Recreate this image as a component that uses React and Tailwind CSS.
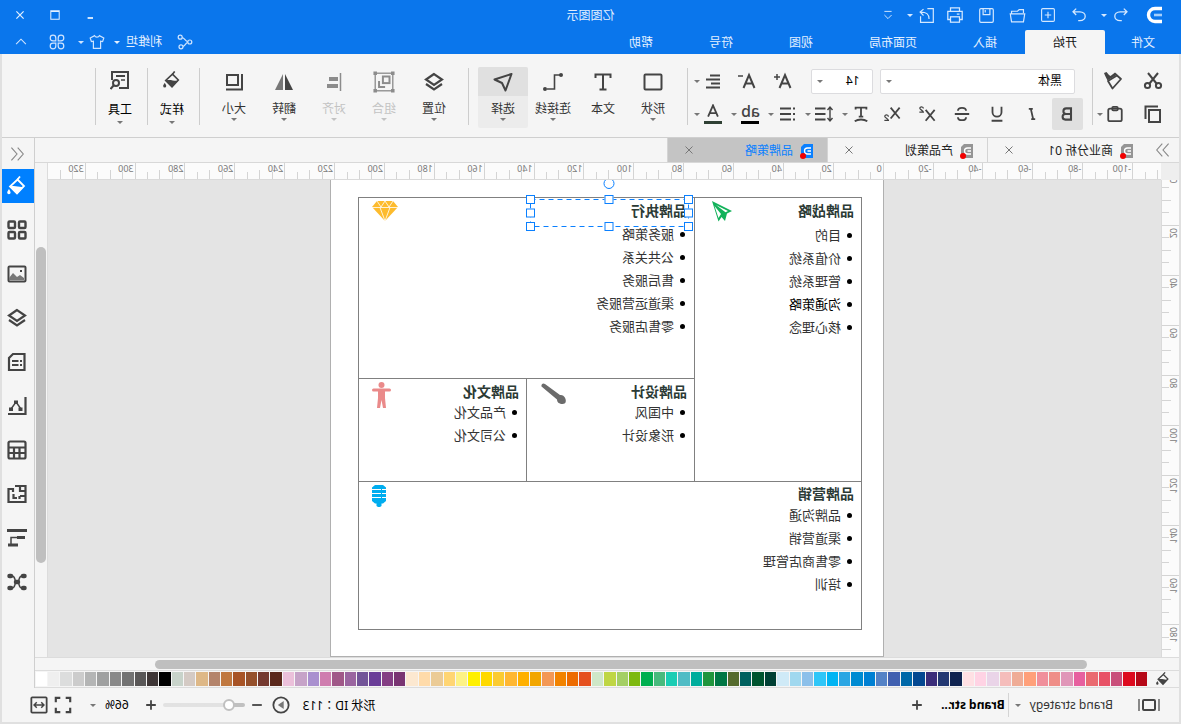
import { useState } from "react";
import clsx from "clsx";

const PALETTE = [
  "#b60817", "#dd0a1e", "#c94f7a", "#e85266", "#ea6a70", "#e7609f", "#e096b8", "#ef8e88", "#f08f9b", "#ffa07a",
  "#efac96", "#f5bdbb", "#ead4e8", "#ffd3e4", "#ffe0e4", "#0f2350", "#233872", "#3b2d7a", "#044891", "#0068a8",
  "#4160b0", "#5482c6", "#0080d3", "#008bd2", "#2ba6e3", "#00b4f3", "#2fc6f8", "#8cc0ea", "#a0d8ef", "#cfeaf7",
  "#004034", "#00542f", "#00615f", "#566b2e", "#007745", "#20953d", "#00ad9c", "#50bcc5", "#1acdb4", "#48ba7d",
  "#00af50", "#7db90f", "#a4cf64", "#bfd644", "#cfe7c8", "#e5501f", "#ed6b00", "#f28300", "#f39855", "#f2a600",
  "#ffb000", "#ffb732", "#fbcb32", "#ffd900", "#fff000", "#fdf286", "#ffd573", "#ebcb96", "#ffdbaa", "#fce8d0",
  "#793472", "#843e84", "#6a3d98", "#725498", "#9a65a0", "#a05888", "#cf7daf", "#a990cf", "#c6a3c8", "#ebc0da",
  "#5a281b", "#753a30", "#95502b", "#a85426", "#c07840", "#b4846b", "#deb887", "#d4cac4", "#c8d3ca", "#000000",
  "#3e3636", "#595757", "#727272", "#898989", "#9fa0a0", "#b4b5b5", "#cccccc", "#dcdddd", "#efefef", "#ffffff",
];

const MENU_TABS = ["文件", "开始", "插入", "页面布局", "视图", "符号", "帮助"];

const DOC_TABS = [
  { id: 1, name: "商业分析 01" },
  { id: 2, name: "产品策划" },
  { id: 3, name: "品牌策略" },
];

const Icon = ({ size = 20, width = 2, className, children }) => (
  <svg
    width={size}
    height={size}
    viewBox="0 0 20 20"
    fill="none"
    stroke="currentColor"
    strokeWidth={width}
    className={clsx("shrink-0", className)}
    aria-hidden="true"
  >
    {children}
  </svg>
);

const Caret = ({ className }) => (
  <svg width="6" height="3" viewBox="0 0 6 3" className={clsx("shrink-0", className)} aria-hidden="true">
    <path d="M0 0h6L3 3z" fill="currentColor" />
  </svg>
);

const IconButton = ({ label, className, children }) => (
  <button type="button" aria-label={label} className={clsx("flex items-center justify-center", className)}>
    {children}
  </button>
);

const BucketIcon = ({ size, className }) => (
  <Icon size={size} className={className} width={1.8}>
    <path d="M7 0.500l2.500 3" />
    <path d="M9.500 3.500L3 10l7 7.500L17 10.500z" />
    <path d="M3 10.500c4 1.500 8-1.500 14 0L10 18z" fill="currentColor" stroke="none" />
    <path d="M18 13c1.300 2 1.800 2.600 1.800 3.600a1.700 1.700 0 0 1-3.400 0c0-1 .5-1.600 1.600-3.600z" fill="currentColor" stroke="none" />
  </Icon>
);

const LayersIcon = ({ size = 20 }) => (
  <Icon size={size} width={2.2}>
    <path d="M10 2l8 5.500-8 5.500-8-5.500z" />
    <path d="M2 12l8 5.500 8-5.500" />
  </Icon>
);

/* ---------- title bar ---------- */

const TitleBar = () => (
  <div className="grid h-[30px] grid-cols-[1fr_auto_1fr] items-center">
    <div className="flex items-center text-[#d4e8ff]">
      <span className="flex w-[47px] pl-[19px]">
        <svg width="16" height="18" viewBox="0 0 16 18" fill="none" aria-hidden="true">
          <path d="M0 2.500h7a6.500 6.500 0 0 1 0 13H0" stroke="#fff" strokeWidth="3.400" />
          <path d="M0 9h8" stroke="#a5cffb" strokeWidth="2.600" />
        </svg>
      </span>
      <IconButton label="撤销" className="w-[26px]">
        <Icon size={16} width={1.6}>
          <path d="M6.500 2L2.500 6l4 4M3 6h8c9 0 9 11 0 11H9" />
        </Icon>
      </IconButton>
      <IconButton label="撤销列表" className="mr-[5px] w-2"><Caret /></IconButton>
      <IconButton label="恢复" className="w-[31px]">
        <Icon size={16} width={1.6}>
          <path d="M13.500 2l4 4-4 4M17 6H9C0 6 0 17 9 17h2" />
        </Icon>
      </IconButton>
      <IconButton label="新建" className="w-[31px]">
        <Icon size={16} width={1.4}>
          <rect x="2" y="2" width="16" height="16" rx="1.500" />
          <path d="M10 6v8M6 10h8" />
        </Icon>
      </IconButton>
      <IconButton label="打开" className="w-[31px]">
        <Icon size={17} width={1.4}>
          <path d="M3 7V3h5l2 2h7v3M1.500 8h17L17 17.500H3z" />
        </Icon>
      </IconButton>
      <IconButton label="保存" className="w-[31px]">
        <Icon size={17} width={1.4}>
          <rect x="2" y="2" width="16" height="16" rx="1.500" />
          <path d="M6 2v7h8V2M11.500 3.500v3" />
        </Icon>
      </IconButton>
      <IconButton label="打印" className="w-[31px]">
        <Icon size={18} width={1.4}>
          <path d="M5 6V2h10v4M5 15H2V6h16v9h-3" />
          <rect x="5" y="12" width="10" height="6" />
          <path d="M5 9h3" />
        </Icon>
      </IconButton>
      <IconButton label="导出" className="w-[26px]">
        <Icon size={17} width={1.4}>
          <path d="M9 2H2v16h15v-7M7 14c0-6 3-8 10-8M13.500 2.500L17.500 6l-4 4" />
        </Icon>
      </IconButton>
      <IconButton label="导出列表" className="w-2"><Caret /></IconButton>
      <IconButton label="自定义" className="w-[36px]">
        <Icon size={12} width={1.6}>
          <path d="M4 4h12M4 10l6 6 6-6" />
        </Icon>
      </IconButton>
    </div>
    <h1 className="pt-px text-[12px] leading-[16px] text-[#e4f0ff]">亿图图示</h1>
    <div className="flex justify-end pr-[3px] text-[#e4f0ff]">
      <IconButton label="最小化" className="h-[30px] w-[35px]">
        <Icon size={12} width={3}><path d="M5 15h9" /></Icon>
      </IconButton>
      <IconButton label="最大化" className="h-[30px] w-[35px]">
        <Icon size={12} width={1.7}><path d="M3 3h14v14H3zM3 4h14" /></Icon>
      </IconButton>
      <IconButton label="关闭" className="h-[30px] w-[35px]">
        <Icon size={12} width={2}><path d="M4 4l12 12M16 4L4 16" /></Icon>
      </IconButton>
    </div>
  </div>
);

const MenuBar = ({ active, onSelect }) => (
  <div className="flex h-6 justify-between">
    <nav className="flex">
      {MENU_TABS.map((name) => (
        <button
          key={name}
          type="button"
          onClick={() => onSelect(name)}
          className={clsx(
            "flex h-6 items-center justify-center whitespace-nowrap rounded-t-xs pt-[2px] text-[12px]",
            name === "文件" ? "w-[76px]" : "px-7",
            name === active ? "bg-[#f5f5f5] text-[#111]" : "text-[#e4f0ff]"
          )}
        >
          {name}
        </button>
      ))}
    </nav>
    <div className="flex items-center pr-1 text-[#cfe4ff]">
      <IconButton label="分享" className="w-6">
        <Icon size={16} width={1.5}>
          <circle cx="4" cy="10" r="2.500" />
          <circle cx="16" cy="4" r="2.500" />
          <circle cx="15" cy="16" r="2.500" />
          <path d="M6.500 9.500C10 9 10 5 13.500 4.500M6.500 10.500c3 .5 3 4.500 6 5" />
        </Icon>
      </IconButton>
      <button type="button" className="ml-[11px] flex items-center gap-[6px] text-[12px] text-[#e4f0ff]">
        利维坦 <Caret />
      </button>
      <IconButton label="主题" className="ml-[7px] w-[20px]">
        <Icon size={16} width={1.5}>
          <path d="M7 2c1 2.500 5 2.500 6 0l5.500 3-1.500 4.500-2.500-.5v9h-9V9L3 9.500 1.500 5z" />
        </Icon>
      </IconButton>
      <IconButton label="主题列表" className="w-3"><Caret /></IconButton>
      <IconButton label="应用" className="w-[36px]">
        <Icon size={16} width={1.5}>
          <path d="M8.500 8.500H5A3.500 3.500 0 1 1 8.500 5zM11.500 8.500V5A3.500 3.500 0 1 1 15 8.500zM8.500 11.500V15A3.500 3.500 0 1 1 5 11.500zM11.500 11.500H15a3.500 3.500 0 1 1-3.500 3.500z" />
        </Icon>
      </IconButton>
      <IconButton label="收起" className="w-[35px]">
        <Icon size={14} width={1.6}><path d="M3 13l7-7 7 7" /></Icon>
      </IconButton>
    </div>
  </div>
);

/* ---------- ribbon ---------- */

const Divider = ({ className }) => <div className={clsx("h-[57px] w-px shrink-0 bg-[#cdcdcd]", className)} />;

const SplitButton = ({ label, children }) => (
  <div className="flex h-full w-[37px] items-center">
    <IconButton label={label} className="w-[27px] pl-1">{children}</IconButton>
    <IconButton label={`${label}选项`} className="h-full w-[10px] text-[#777]"><Caret /></IconButton>
  </div>
);

const SelectBox = ({ label, className, value }) => (
  <div className={clsx("relative h-[25px]", className)}>
    <select
      aria-label={label}
      defaultValue={value}
      className="block h-[25px] w-full appearance-none rounded-xs border border-[#dcdcdf] bg-white px-3 text-[12px] leading-[20px] text-black"
    >
      <option>{value}</option>
    </select>
    <Caret className="pointer-events-none absolute right-[6px] top-[11px] text-[#777]" />
  </div>
);

const BigButton = ({ label, disabled, active, dropdown = true, children }) => (
  <button
    type="button"
    disabled={disabled}
    className={clsx(
      "flex h-[61px] w-[50px] flex-col items-center rounded-xs text-[12px]",
      disabled ? "text-[#c3c3c3]" : "text-[#333]",
      active && "bg-[#ececec]"
    )}
  >
    <span
      className={clsx(
        "flex h-[29px] w-full items-center justify-center rounded-t-xs",
        disabled ? "text-[#8c8c8c]" : "text-[#444]",
        active && "bg-[#e0e0e0]"
      )}
    >
      {children}
    </span>
    <span className="mt-[5px] whitespace-nowrap leading-[16px]">{label}</span>
    {dropdown && <Caret className={clsx("mt-px", disabled ? "text-[#c3c3c3]" : "text-[#777]")} />}
  </button>
);

const TallButton = ({ label, children }) => (
  <button type="button" className="flex h-[61px] w-[50px] flex-col items-center pl-1 text-[12px] text-black">
    <span className="flex h-6 items-center text-[#444]">{children}</span>
    <span className="mt-[10px] whitespace-nowrap leading-[16px]">{label}</span>
    <Caret className="mt-[3px] text-[#777]" />
  </button>
);

const FontGroup = () => (
  <div className="flex w-[391px] shrink-0 flex-col gap-1 text-[#444]">
    <div className="flex h-[26px] items-center pl-2">
      <SelectBox label="字体" value="黑体" className="w-[196px]" />
      <SelectBox label="字号" value="14" className="ml-[7px] w-[62px]" />
      <IconButton label="增大字号" className="ml-[10px] w-9">
        <Icon><path d="M2.500 17L8 4l5.500 13M4.500 12.500h7" /><path d="M16 3v6M13 6h6" strokeWidth="1.500" /></Icon>
      </IconButton>
      <IconButton label="减小字号" className="w-9">
        <Icon><path d="M2.500 17L8 4l5.500 13M4.500 12.500h7" /><path d="M14 5h5" strokeWidth="1.500" /></Icon>
      </IconButton>
      <SplitButton label="对齐">
        <Icon><path d="M3 4.500h10M3 8.500h14M3 12.500h9M3 16.500h14" /></Icon>
      </SplitButton>
    </div>
    <div className="flex h-8 items-center">
      <button type="button" aria-label="加粗" className="flex h-8 w-[31px] items-center justify-center rounded-xs bg-[#e0e0e0]">
        <Icon size={16} width={2.6}><path d="M5 3h6a3.300 3.300 0 0 1 0 7H5zM5 10h7a3.500 3.500 0 0 1 0 7H5z" /></Icon>
      </button>
      <IconButton label="斜体" className="w-[35px] pl-1">
        <Icon size={16} width={2.2}><path d="M9 3.500h5M11.500 3.500l-3 13M6 16.500h5" /></Icon>
      </IconButton>
      <IconButton label="下划线" className="w-[35px] pl-1">
        <Icon size={18}><path d="M5 2v6a5 5 0 0 0 10 0V2M4 17.500h12" /></Icon>
      </IconButton>
      <IconButton label="删除线" className="w-[35px] pl-1">
        <Icon size={18}><path d="M14.500 6.500c0-4.500-9-4.500-9 0M5.500 13.500c0 4.500 9 4.500 9 0M2 10h16" /></Icon>
      </IconButton>
      <IconButton label="上标" className="w-[35px] pl-1">
        <Icon size={18}><path d="M1.500 5.500l10 12M11.500 5.500l-10 12" /><path d="M14 4c0-2.500 4-2.500 4-.3C18 5 14 6.500 14 8h4.500" strokeWidth="1.400" /></Icon>
      </IconButton>
      <IconButton label="下标" className="w-[35px] pl-1">
        <Icon size={18}><path d="M1.500 3l10 12M11.500 3l-10 12" /><path d="M14 13c0-2.500 4-2.500 4-.3 0 1.300-4 2.800-4 4.300h4.500" strokeWidth="1.400" /></Icon>
      </IconButton>
      <SplitButton label="文字方向">
        <Icon size={18}><path d="M4 5V3h12v2M10 3v10M7.500 13h5M3 18c4-2.500 10-2.500 14 0" /></Icon>
      </SplitButton>
      <SplitButton label="行距">
        <Icon><path d="M8.500 4.500H19M8.500 10H19M8.500 15.500H19" /><path d="M4 3v14M1.500 6L4 3l2.500 3M1.500 14L4 17l2.500-3" strokeWidth="1.400" /></Icon>
      </SplitButton>
      <SplitButton label="项目符号">
        <Icon><path d="M6 4.500h11M6 10h11M6 15.500h11M2 4.500h2M2 10h2M2 15.500h2" /></Icon>
      </SplitButton>
      <SplitButton label="突出显示">
        <span className="flex w-[18px] flex-col items-center text-[16px] font-medium leading-[15px]">
          ab
          <span className="mt-[2px] h-[3px] w-[18px] bg-black" />
        </span>
      </SplitButton>
      <SplitButton label="字体颜色">
        <span className="flex w-[18px] flex-col items-center">
          <Icon size={14} width={2.6}><path d="M3 18L10 2l7 16M5.500 13h9" /></Icon>
          <span className="mt-[3px] h-[3px] w-[18px] bg-[#2f4034]" />
        </span>
      </SplitButton>
    </div>
  </div>
);

const Ribbon = () => (
  <div className="flex h-[84px] items-start overflow-hidden border-b border-[#cfcfcf] bg-[#f5f5f5] pt-[14px]">
    <div className="grid h-[60px] w-[73px] shrink-0 grid-cols-[28px_28px_10px] content-between gap-x-[10px] pl-3 text-[#444]">
      <IconButton label="剪切" className="h-[26px]">
        <Icon>
          <circle cx="4.500" cy="14.500" r="2.600" />
          <circle cx="15.500" cy="14.500" r="2.600" />
          <path d="M5 2l8.500 10.500M15 2L6.500 12.500" />
        </Icon>
      </IconButton>
      <IconButton label="格式刷" className="col-span-2 h-[26px] w-8">
        <Icon width={1.8}>
          <path d="M2 8l4-3.500L15 10l-4.500 7.500z" strokeLinejoin="round" />
          <path d="M5.500 3.500l10 6 1-2L18 4.500 19 2 16.500 1 14 4 12.500 5 8 1.500z" fill="currentColor" stroke="none" />
        </Icon>
      </IconButton>
      <IconButton label="复制" className="h-7">
        <Icon><rect x="3" y="6" width="11" height="12" /><path d="M5 2.500h12.500V15" /></Icon>
      </IconButton>
      <IconButton label="粘贴" className="h-7">
        <Icon size={18}><rect x="2.500" y="4" width="15" height="14" rx="2" /><rect x="7" y="2" width="6" height="4" rx="1" /></Icon>
      </IconButton>
    </div>
    <IconButton label="粘贴选项" className="mt-8 h-7 w-3 text-[#777]"><Caret /></IconButton>
    <Divider className="ml-px mr-[9px]" />
    <FontGroup />
    <Divider className="ml-1 mr-[9px]" />
    <div className="-mt-px flex">
      <BigButton label="形状"><Icon><rect x="1.500" y="2.500" width="17" height="15" rx="1" /></Icon></BigButton>
      <BigButton label="文本" dropdown={false}>
        <Icon><path d="M2.500 6V2.500h15V6M10 2.500v15M6.500 17.500h7" /></Icon>
      </BigButton>
      <BigButton label="连接线">
        <Icon width={1.6}>
          <path d="M3 3h5.500v14H16" />
          <circle cx="2" cy="3" r="2" fill="currentColor" stroke="none" />
          <circle cx="18" cy="17" r="2" fill="currentColor" stroke="none" />
        </Icon>
      </BigButton>
      <BigButton label="选择" active>
        <Icon><path d="M1.500 2l17 5.500-7.500 3.500-3.500 7.500z" strokeLinejoin="round" /></Icon>
      </BigButton>
    </div>
    <Divider className="mx-[9px]" />
    <div className="-mt-px flex">
      <BigButton label="位置"><LayersIcon /></BigButton>
      <BigButton label="组合" disabled>
        <Icon size={22} width={1.2}>
          <rect x="2" y="2" width="16" height="16" />
          <rect x="5" y="5" width="6" height="6" strokeWidth="1.800" />
          <path d="M9 14.500h5.500V9" strokeWidth="1.800" />
          <path d="M1 1h2v2H1zM17 1h2v2h-2zM1 17h2v2H1zM17 17h2v2h-2z" fill="currentColor" />
        </Icon>
      </BigButton>
      <BigButton label="对齐" disabled>
        <Icon width={4}><path d="M3.500 1v18" strokeWidth="1.500" /><path d="M6 7h9M6 14h11" /></Icon>
      </BigButton>
      <BigButton label="翻转">
        <Icon>
          <path d="M9 2v16H1z" fill="#444" stroke="none" />
          <path d="M11 2v16h8z" fill="#777" stroke="none" />
        </Icon>
      </BigButton>
      <BigButton label="大小"><Icon><rect x="6" y="3" width="11" height="10" /><path d="M2 2v15.500h16" /></Icon></BigButton>
    </div>
    <Divider className="ml-[9px]" />
    <TallButton label="样式"><BucketIcon size={18} /></TallButton>
    <Divider className="ml-px" />
    <TallButton label="工具">
      <Icon>
        <path d="M11 18H2V2h16v8M5 6h9" />
        <path d="M5 10h4" strokeWidth="1.500" />
        <circle cx="14" cy="13" r="3" />
        <path d="M16 15l3.500 4" />
      </Icon>
    </TallButton>
    <Divider className="ml-px" />
  </div>
);

/* ---------- document area ---------- */

const DocTab = ({ name, active, onClick }) => (
  <div
    className={clsx(
      "flex h-6 w-[160px] items-center border-r border-[#d4d4d4] pl-[13px] pr-[15px] text-[12px]",
      active ? "bg-[#c4c4c4] text-[#0a80ff]" : "bg-[#f5f5f5] text-[#222]"
    )}
  >
    <button type="button" onClick={onClick} className="flex flex-1 items-center gap-[7px] pt-px">
      <svg width="14" height="16" viewBox="0 0 14 16" className="shrink-0" aria-hidden="true">
        <path d="M1 1h9l3 3v11H1z" fill={active ? "#0a80ff" : "#959595"} />
        <path d="M3 5h3.500a3 3 0 0 1 0 6H3M3 8h3.500" stroke="#fff" strokeWidth="1.300" fill="none" />
        <circle cx="11" cy="13" r="3" fill="#f20000" />
      </svg>
      {name}
    </button>
    <IconButton label={`关闭 ${name}`} className="h-4 w-3 text-[#777]">
      <Icon size={10} width={2}><path d="M3 3l14 14M17 3L3 17" /></Icon>
    </IconButton>
  </div>
);

// one cell stands for 5 units, the first one is at -110
const HorizontalRuler = () => (
  <div className="flex h-[17px] overflow-hidden border-b border-[#dadada] bg-[#fbfbfb] pl-[3px]">
    {Array.from({ length: 89 }, (_, i) => i * 5 - 110).map((value) => (
      <div key={value} className="flex min-w-0 flex-1 items-end whitespace-nowrap text-[9px] leading-[12px] text-[#7a7a7a]">
        <span
          className={clsx(
            "w-px shrink-0 bg-[#d4d4d4]",
            value % 20 === 0 ? "h-full" : value % 10 === 0 ? "h-[9px]" : "h-[7px]"
          )}
        />
        {value % 20 === 0 && <span className="self-start pl-px">{value}</span>}
      </div>
    ))}
  </div>
);

const VerticalRuler = () => (
  <div className="w-[18px] shrink-0 overflow-hidden border-r border-[#dadada] bg-[#fbfbfb]">
    <div className="-mt-[5px] flex h-[487px] flex-col">
      {Array.from({ length: 39 }, (_, i) => i * 5).map((value) => (
        <div key={value} className="flex min-h-0 flex-1 flex-col items-end text-[9px] leading-[12px] text-[#7a7a7a]">
          <span
            className={clsx(
              "h-px shrink-0 bg-[#d4d4d4]",
              value % 20 === 0 ? "w-full" : value % 10 === 0 ? "w-[9px]" : "w-[7px]"
            )}
          />
          {value % 20 === 0 && (
            <span className="mt-[2px] self-start rotate-180 [writing-mode:vertical-rl]">{value}</span>
          )}
        </div>
      ))}
    </div>
  </div>
);

const Block = ({ title, items, picture, className, listClass, children }) => (
  <section className={clsx("relative flex items-start justify-between border-b border-r border-[#808080] pl-[7px]", className)}>
    <div>
      <h2 className="whitespace-nowrap text-[14px] font-bold leading-[20px] text-[#2b3a35]">{title}</h2>
      <ul className={clsx("text-[13px] leading-[23px] text-[#333]", listClass)}>
        {items.map((item) => (
          <li key={item} className={clsx("flex items-center gap-[6px] whitespace-nowrap pl-[2px]", item === "沟通策略" && "text-black")}>
            <span className="size-[5px] rounded-full bg-black" />
            {item}
          </li>
        ))}
      </ul>
    </div>
    {picture}
    {children}
  </section>
);

const HANDLES = [
  "-left-1 -top-1",
  "left-1/2 -translate-x-1/2 -top-1",
  "-right-1 -top-1",
  "-left-1 top-1/2 -translate-y-1/2",
  "-right-1 top-1/2 -translate-y-1/2",
  "-left-1 -bottom-1",
  "left-1/2 -translate-x-1/2 -bottom-1",
  "-right-1 -bottom-1",
];

const Selection = () => (
  <div className="absolute left-[5px] top-[1px] h-7 w-[159px]">
    <svg width="159" height="28" fill="none" stroke="#0a80ff" className="block" aria-hidden="true">
      <rect x="0.500" y="0.500" width="158" height="27" strokeDasharray="5 4" />
    </svg>
    <span className="absolute -top-[21px] left-1/2 size-[11px] -translate-x-1/2 rounded-full border border-[#0a80ff] bg-white" />
    {HANDLES.map((place) => (
      <span key={place} className={clsx("absolute size-[9px] border border-[#0a80ff] bg-white", place)} />
    ))}
  </div>
);

const PlanePicture = () => (
  <svg width="20" height="21" viewBox="0 0 20 21" className="mr-[17px] shrink-0" aria-hidden="true">
    <path d="M20 0L0 10l5 2.500L7 20l3.500-4 3 4.500z" fill="#12b25a" />
    <path d="M16 4L4 10l2.500 1.300zM17.500 5l-4 12-2.500-4z" fill="#fff" />
  </svg>
);

const DiamondPicture = () => (
  <svg width="26" height="20" viewBox="0 0 26 20" className="mr-[13px] shrink-0" aria-hidden="true">
    <path d="M5 0h16l5 6-13 14L0 6z" fill="#fdbb2d" />
    <path d="M0 6.500h26M5 0l4 6 4-6 4 6 4-6M8 6.500L13 20l5-13.500" stroke="#fff" strokeWidth="0.800" fill="none" />
  </svg>
);

const BrushPicture = () => (
  <svg width="26" height="22" viewBox="0 0 26 22" className="mr-[14px] mt-px shrink-0" aria-hidden="true">
    <path d="M22 1c2-1.500 4 0 3.500 2.500L10 16.500c0 3-2.500 4.500-5.500 4.500-2 0-2.500-1-3-1.500C1 18 1 16 2.500 14c1.500-2 3.500-2 4.500-2z" fill="#6b6b6b" />
  </svg>
);

const PersonPicture = () => (
  <svg width="19" height="27" viewBox="0 0 19 27" className="mr-[13px] shrink-0" fill="#ea8a8a" aria-hidden="true">
    <circle cx="9.500" cy="3" r="3" />
    <path d="M1.500 6.500h16a1.500 1.500 0 0 1 0 3H13V16l1 10h-3L9.500 18 8 26H5l1-10V9.500H1.500a1.500 1.500 0 0 1 0-3z" />
  </svg>
);

const MicPicture = () => (
  <svg width="14" height="22" viewBox="0 0 14 22" className="mr-[13px] mt-px shrink-0" aria-hidden="true">
    <path d="M3 0h8l3 2.500V16l-3 2.500H9.500V21L8 22H6l-1.500-1v-2.500H3L0 16V2.500z" fill="#00adef" />
    <path d="M0 4.500h4M5 4.500h9M0 8.500h4M5 8.500h9M0 12.500h4M5 12.500h9" stroke="#fff" strokeWidth="1" />
  </svg>
);

const Canvas = () => (
  <div className="min-h-0 min-w-0 flex-1 overflow-hidden bg-[#e4e4e4]">
    <div className="ml-[277px] h-[477px] w-[554px] border-x border-b border-[#b0b0b0] bg-white pl-[21px] pt-[17px]">
      <div className="grid w-[504px] grid-cols-[167px_168px_168px] grid-rows-[181px_103px_148px] border-l border-t border-[#808080]">
        <Block
          title="品牌战略"
          items={["目的", "价值系统", "管理系统", "沟通策略", "核心理念"]}
          className="row-span-2 pt-[3px]"
          listClass="mt-[3px]"
          picture={<PlanePicture />}
        />
        <Block
          title="品牌执行"
          items={["服务策略", "公共关系", "售后服务", "渠道运营服务", "零售店服务"]}
          className="col-span-2 pt-[3px]"
          listClass="mt-[2px]"
          picture={<DiamondPicture />}
        >
          <Selection />
        </Block>
        <Block
          title="品牌设计"
          items={["中国风", "形象设计"]}
          className="pt-[3px]"
          listClass="-mt-px"
          picture={<BrushPicture />}
        />
        <Block
          title="品牌文化"
          items={["产品文化", "公司文化"]}
          className="pt-[3px]"
          listClass="-mt-px"
          picture={<PersonPicture />}
        />
        <Block
          title="品牌营销"
          items={["品牌沟通", "渠道营销", "零售商店管理", "培训"]}
          className="col-span-3 pt-[2px]"
          picture={<MicPicture />}
        />
      </div>
    </div>
  </div>
);

const SIDE_TOOLS = [
  { name: "填充", icon: <BucketIcon size={20} /> },
  {
    name: "符号库",
    icon: (
      <Icon width={2.4}>
        <rect x="1.500" y="1.500" width="6.500" height="6.500" rx="1" />
        <rect x="12" y="1.500" width="6.500" height="6.500" rx="1" />
        <rect x="1.500" y="12" width="6.500" height="6.500" rx="1" />
        <rect x="12" y="12" width="6.500" height="6.500" rx="1" />
      </Icon>
    ),
  },
  {
    name: "图片",
    icon: (
      <Icon>
        <rect x="1.500" y="2.500" width="17" height="15" rx="1" />
        <path d="M3 16v-2l4-3 3 2 4-4 4 5v2z" fill="#777" stroke="none" />
        <path d="M5 6h2v2H5z" fill="currentColor" stroke="none" />
      </Icon>
    ),
  },
  { name: "图层", icon: <LayersIcon /> },
  {
    name: "备注",
    icon: (
      <Icon width={2.2}>
        <path d="M2.500 2H14l4 4v12H2.500z" />
        <path d="M5 9h2M8.500 9H15M5 13h2M8.500 13H15" strokeWidth="1.800" />
      </Icon>
    ),
  },
  {
    name: "图表",
    icon: (
      <Icon width={2.2}>
        <path d="M1.500 1v17H19" />
        <path d="M6 13l5-7 5 7" strokeWidth="1.400" />
        <path d="M4.500 11.500h4v3.500h-4zM9 4.500h4V8H9zM14 11.500h4v3.500h-4z" fill="currentColor" stroke="none" />
      </Icon>
    ),
  },
  {
    name: "表格",
    icon: (
      <Icon width={2.2}>
        <rect x="1.500" y="1.500" width="17" height="17" rx="1.500" />
        <path d="M2 7.500h16M2 13h16M7.500 7.500V18M13 7.500V18" />
      </Icon>
    ),
  },
  {
    name: "平面图",
    icon: (
      <Icon width={2.2}>
        <path d="M12 2H1.500v16h17V5H14v3M7 2v5H2M7 12H2M7.500 12v3M13.500 10v4H10" />
      </Icon>
    ),
  },
  {
    name: "时间线",
    icon: (
      <Icon width={3}>
        <path d="M0 2.500h20M2 9.500h8M9 17h10" />
        <path d="M10 9.500h6V17" strokeWidth="1.500" />
      </Icon>
    ),
  },
  {
    name: "思维导图",
    icon: (
      <Icon width={1.5}>
        <path d="M5 4c4 0 2 6 5 6s1-6 5-6M5 16c4 0 2-6 5-6s1 6 5 6" />
        <path d="M2.500 4h1.500M2.500 16h1.500M16 4h1.500M16 16h1.500M9 10h2" strokeWidth="4.500" strokeLinecap="round" />
      </Icon>
    ),
  },
];

const SideBar = () => (
  <aside className="w-[33px] shrink-0 border-l border-[#cfcfcf] bg-[#f5f5f5] text-[#444]">
    <IconButton label="展开面板" className="h-[31px] w-full pl-[2px] text-[#888]">
      <Icon size={14} width={1.6}><path d="M9 1L1 10l8 9M18 1l-8 9 8 9" /></Icon>
    </IconButton>
    <div className="flex flex-col gap-[10px]">
      {SIDE_TOOLS.map((tool, index) => (
        <IconButton
          key={tool.name}
          label={tool.name}
          className={clsx("h-[34px] w-full pl-[2px]", index === 0 && "bg-[#0080ff] text-white")}
        >
          {tool.icon}
        </IconButton>
      ))}
    </div>
  </aside>
);

const PaletteBar = () => (
  <div className="flex h-[17px] items-center border-b border-[#dcdcdc] bg-[#f5f5f5]">
    <IconButton label="填充颜色" className="w-8 shrink-0 text-[#444]"><BucketIcon size={14} /></IconButton>
    <div className="mr-px flex flex-1 gap-px">
      {PALETTE.map((color) => (
        <button
          key={color}
          type="button"
          aria-label={color}
          className="h-[14px] min-w-0 flex-1"
          style={{ backgroundColor: color }}
        />
      ))}
    </div>
  </div>
);

const StatusBar = () => (
  <footer className="flex h-[34px] items-center justify-between bg-[#f5f5f5] text-[12px] text-black">
    <div className="flex items-center">
      <IconButton label="页面视图" className="ml-[18px] w-6 text-[#444]">
        <svg width="22" height="14" viewBox="0 0 22 14" fill="none" stroke="currentColor" strokeWidth="2" aria-hidden="true">
          <rect x="5" y="2" width="12" height="10" rx="1" />
          <path d="M1 1v12M21 1v12" stroke="#888" />
        </svg>
      </IconButton>
      <button type="button" className="ml-6 flex items-center gap-[9px] whitespace-nowrap text-[#333]">
        Brand strategy <Caret className="text-[#777]" />
      </button>
      <div className="ml-[6px] h-6 w-px bg-[#d4d4d4]" />
      <button type="button" className="ml-[3px] whitespace-nowrap font-bold">Brand str...</button>
      <IconButton label="新建页面" className="ml-[14px] w-[20px] text-[#444]">
        <Icon size={12} width={3}><path d="M10 2v16M2 10h16" /></Icon>
      </IconButton>
    </div>
    <div className="flex items-center text-[#444]">
      <span className="whitespace-nowrap text-black">
        形状 ID<span className="font-['Noto_Sans_CJK_TC',sans-serif]">：</span>113
      </span>
      <IconButton label="演示" className="ml-3 w-5">
        <Icon size={18}><circle cx="10" cy="10" r="8.500" /><path d="M7 5.500l6.500 4.500L7 14.500z" fill="#777" stroke="none" /></Icon>
      </IconButton>
      <IconButton label="缩小" className="ml-1 w-5">
        <Icon size={12} width={3}><path d="M2 10h16" /></Icon>
      </IconButton>
      <input
        type="range"
        aria-label="缩放"
        min="10"
        max="400"
        defaultValue="66"
        className="ml-[2px] h-1 w-[82px] appearance-none rounded-full bg-linear-to-r from-[#c0c0c0] from-20% to-[#e2e2e2] to-20% [&::-webkit-slider-thumb]:size-3 [&::-webkit-slider-thumb]:appearance-none [&::-webkit-slider-thumb]:rounded-full [&::-webkit-slider-thumb]:border-2 [&::-webkit-slider-thumb]:border-[#c0c0c0] [&::-webkit-slider-thumb]:bg-white"
      />
      <IconButton label="放大" className="ml-[2px] w-5">
        <Icon size={12} width={3}><path d="M10 2v16M2 10h16" /></Icon>
      </IconButton>
      <button type="button" className="ml-3 flex items-center gap-[9px] text-black">
        66% <Caret className="text-[#777]" />
      </button>
      <IconButton label="全屏" className="ml-[17px] w-5">
        <Icon size={18} width={2.4}><path d="M2 7V2h5M13 2h5v5M18 13v5h-5M7 18H2v-5" /></Icon>
      </IconButton>
      <IconButton label="适应页面" className="ml-1 mr-[27px] w-5">
        <Icon size={18}><rect x="1.500" y="1.500" width="17" height="17" rx="1" /><path d="M5 10h10M7.500 7L4.500 10l3 3M12.500 7l3 3-3 3" strokeWidth="1.600" /></Icon>
      </IconButton>
    </div>
  </footer>
);

const App = () => {
  const [menu, setMenu] = useState("开始");
  const [doc, setDoc] = useState(3);

  return (
    <div className="flex h-screen -scale-x-100 flex-col overflow-hidden bg-[#e0e0e0] pb-[2px] font-['Noto_Sans','Noto_Sans_CJK_SC',sans-serif]">
      <header className="bg-[#0a76ec]">
        <TitleBar />
        <MenuBar active={menu} onSelect={setMenu} />
      </header>
      <div className="flex min-h-0 flex-1 flex-col px-[2px]">
        <Ribbon />
        <div className="flex min-h-0 flex-1">
          <main className="flex min-w-0 flex-1 flex-col">
            <div className="flex h-[25px] border-b border-[#d8d8d8] bg-[#f5f5f5]">
              <IconButton label="收起面板" className="w-8 text-[#888]">
                <Icon size={14} width={1.6}><path d="M2 1l8 9-8 9M11 1l8 9-8 9" /></Icon>
              </IconButton>
              {DOC_TABS.map((tab) => (
                <DocTab key={tab.id} name={tab.name} active={tab.id === doc} onClick={() => setDoc(tab.id)} />
              ))}
            </div>
            <div className="flex min-h-0 flex-1">
              <div className="flex min-w-0 flex-1 flex-col">
                <div className="flex">
                  <div className="w-[18px] shrink-0 bg-[#eee]" />
                  <div className="min-w-0 flex-1"><HorizontalRuler /></div>
                </div>
                <div className="flex min-h-0 flex-1">
                  <VerticalRuler />
                  <Canvas />
                </div>
              </div>
              <div className="flex w-[13px] shrink-0 flex-col items-center border-l border-[#dcdcdc] bg-[#f5f5f5]">
                <div className="flex-[84]" />
                <div className="w-[10px] flex-[316] rounded-full bg-[#bfbfbf]" />
                <div className="flex-[94]" />
              </div>
            </div>
            <div className="flex h-[14px] items-center border-y border-[#dcdcdc] bg-[#f5f5f5]">
              <div className="flex-[92]" />
              <div className="h-[9px] flex-[932] rounded-full bg-[#bfbfbf]" />
              <div className="flex-[120]" />
            </div>
            <PaletteBar />
          </main>
          <SideBar />
        </div>
        <StatusBar />
      </div>
    </div>
  );
};

export default App;
